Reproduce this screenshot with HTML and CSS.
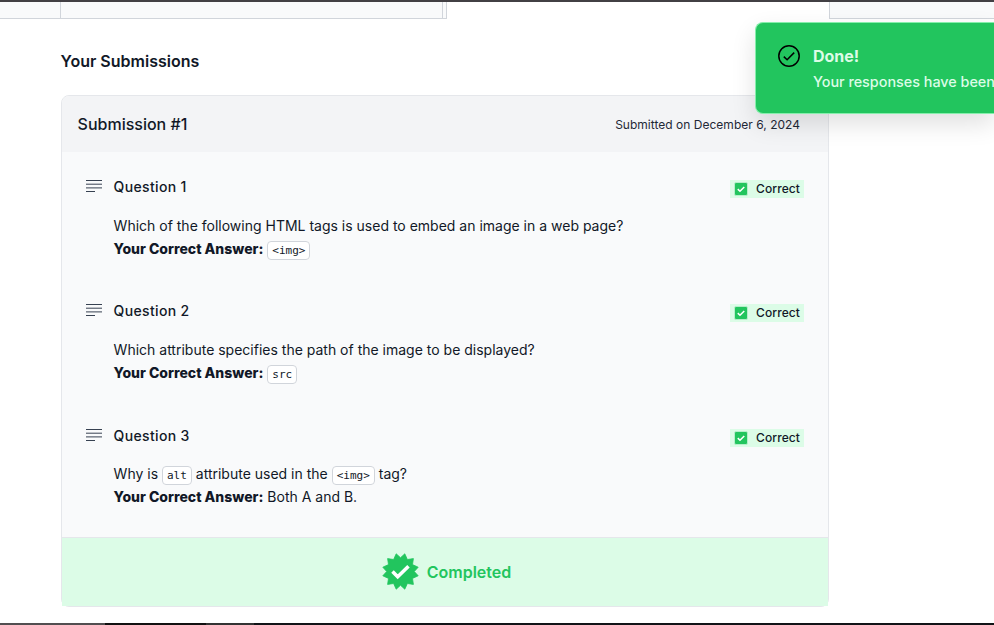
FILE: index.html
```html
<!DOCTYPE html>
<html lang="en">
<head>
<meta charset="utf-8">
<title>Your Submissions</title>
<link rel="stylesheet" href="styles.css">
</head>
<body>
<div class="top">
  <div class="panes"><span class="pane-nav"></span><span class="pane-main"></span><span class="pane-scroll"></span></div>
  <div class="side-pane"></div>
</div>
<main>
  <h2>Your Submissions</h2>
  <section class="card">
    <header><h3>Submission #1</h3><span class="date">Submitted on December 6, 2024</span></header>
    <div class="questions">
      <article>
        <svg class="lines" viewBox="0 0 16 12"><path d="M0 .5h16M0 4.2h16M0 7.9h16M0 11.5h9"/></svg>
        <div class="body"><h4>Question 1</h4>
          <p class="ask">Which of the following HTML tags is used to embed an image in a web page?</p>
          <p><b>Your Correct Answer:</b> <code>&lt;img&gt;</code></p></div>
        <span class="badge"><svg class="box" viewBox="0 0 14 14"><path d="m3.2 7.2 2.6 2.4L10.8 4.6"/></svg>Correct</span>
      </article>
      <article>
        <svg class="lines" viewBox="0 0 16 12"><path d="M0 .5h16M0 4.2h16M0 7.9h16M0 11.5h9"/></svg>
        <div class="body"><h4>Question 2</h4>
          <p class="ask">Which attribute specifies the path of the image to be displayed?</p>
          <p><b>Your Correct Answer:</b> <code>src</code></p></div>
        <span class="badge"><svg class="box" viewBox="0 0 14 14"><path d="m3.2 7.2 2.6 2.4L10.8 4.6"/></svg>Correct</span>
      </article>
      <article>
        <svg class="lines" viewBox="0 0 16 12"><path d="M0 .5h16M0 4.2h16M0 7.9h16M0 11.5h9"/></svg>
        <div class="body"><h4>Question 3</h4>
          <p class="ask">Why is <code>alt</code> attribute used in the <code>&lt;img&gt;</code> tag?</p>
          <p><b>Your Correct Answer:</b> Both A and B.</p></div>
        <span class="badge"><svg class="box" viewBox="0 0 14 14"><path d="m3.2 7.2 2.6 2.4L10.8 4.6"/></svg>Correct</span>
      </article>
    </div>
    <footer>
      <svg class="seal" viewBox="-18.5 -18.5 37 37"><path class="star" d="M0 -13.8 4.3 -17.7 6.9 -12 12.9 -12.9 12 -6.9 17.7 -4.3 13.8 0 17.7 4.3 12 6.9 12.9 12.9 6.9 12 4.3 17.7 0 13.8 -4.3 17.7 -6.9 12 -12.9 12.9 -12 6.9 -17.7 4.3 -13.8 0 -17.7 -4.3 -12 -6.9 -12.9 -12.9 -6.9 -12 -4.3 -17.7Z"/><path class="tick" d="m-8 0 5.2 5.3L8-5.3"/></svg>
      <strong>Completed</strong>
    </footer>
  </section>
</main>
<aside class="toast">
  <svg viewBox="0 0 22 22"><circle cx="11" cy="11" r="10.2"/><path d="m5.8 11.6 3.3 3.1 7.1-7.1"/></svg>
  <div><strong>Done!</strong><p>Your responses have been</p></div>
</aside>
<div class="taskbar"><span class="seg-light"></span><span class="seg-dark"></span><span class="seg-mid"></span><span class="seg-rest"></span></div>
</body>
</html>
```
FILE: styles.css
```css
* { box-sizing: border-box; }
html, body { margin: 0; height: 625px; overflow: hidden; }
body { position: relative; display: flex; flex-direction: column; background: #fff; color: #111827; font-family: Inter, sans-serif; font-size: 14px; }
h2, h3, h4, p { margin: 0; font-weight: 500; }
.top { height: 19px; flex: none; border-top: 2px solid #424044; display: flex; justify-content: space-between; }
.panes { display: flex; width: 447px; border-bottom: 1px solid #d1d5db; background: #f9fafb; }
.pane-nav { width: 61px; border-right: 1px solid #d1d5db; }
.pane-main { width: 382px; border-right: 1px solid #d1d5db; }
.pane-scroll { flex: 1; border-right: 1px solid #d1d5db; }
.side-pane { width: 165px; border: solid #d1d5db; border-width: 0 0 1px 1px; background: #f9fafb; }
main { flex: 1; width: 768px; margin-left: 61px; padding-top: 30px; }
h2 { height: 46px; font-size: 16px; line-height: 25px; font-weight: 600; margin-left: -.4px; }
.card { height: 512px; border: 1px solid #e5e7eb; border-radius: 8px; background: #f9fafb; display: flex; flex-direction: column; }
header { height: 56px; display: flex; align-items: center; justify-content: space-between; padding: 0 28px 1px 15.6px; background: #f3f4f6; border-radius: 7px 7px 0 0; }
h3 { font-size: 16px; font-weight: 450; }
.date { font-size: 12px; color: #1f2937; letter-spacing: .02px; padding-top: 2px; }
.questions { flex: 1; display: grid; grid-template-rows: 124px 125px 1fr; padding: 22px 24px 0; }
article { display: grid; grid-template-columns: 27.6px 1fr auto; align-items: start; }
.lines { width: 16px; height: 12px; margin-top: 6px; stroke: #374151; fill: none; }
h4 { font-size: 14px; line-height: 26px; font-weight: 450; letter-spacing: .35px; margin-bottom: 14px; }
article:last-child h4 { margin-bottom: 13px; }
p { font-size: 14px; line-height: 23px; font-weight: 400; }
b { font-weight: 800; }
code { font-family: "DejaVu Sans Mono", monospace; font-size: 11px; line-height: 1; border: 1px solid #d1d5db; border-radius: 4px; padding: 2px 4px; background: #fff; }
.badge { display: flex; align-items: center; height: 18px; margin-top: 6px; padding: 0 4px 1px; gap: 8.4px; font-size: 12px; font-weight: 450; letter-spacing: .1px; background: #dcfce7; }
.box { width: 14px; height: 14px; border-radius: 2px; background: #22c55e; border: 1px solid #b5efca; fill: none; stroke: #fff; stroke-width: 1.8; }
footer { height: 69px; flex: none; border-top: 1px solid #e5e7eb; background: #dcfce7; display: flex; align-items: center; justify-content: center; gap: 8px; padding: 0 0 1px 3px; color: #22c55e; }
footer strong { font-size: 16px; font-weight: 600; padding-top: 1px; }
.seal { width: 37px; height: 37px; }
.star { fill: #22c55e; stroke: #22c55e; stroke-width: .8; stroke-linejoin: round; }
.tick { fill: none; stroke: #fff; stroke-width: 3.5; }
.toast { position: absolute; left: 755px; right: 0; top: 22px; height: 92px; display: flex; gap: 13px; padding: 22px 0 22px 22px; border: 1px solid #86efac; border-right: 0; border-radius: 8px 0 0 8px; background: #22c55e; color: #dcfce7; box-shadow: 0 10px 24px rgba(0,0,0,.12); white-space: nowrap; }
.toast svg { width: 22px; height: 22px; flex: none; fill: none; stroke: #000; stroke-width: 1.5; }
.toast strong { display: block; font-size: 16px; line-height: 22px; font-weight: 700; }
.toast p { line-height: 29px; font-size: 14.4px; font-weight: 450; letter-spacing: -.02px; }
.taskbar { height: 2px; flex: none; display: flex; }
.seg-light { width: 105px; background: #514e50; }
.seg-dark { width: 101px; background: #111; }
.seg-mid { width: 48px; background: #333; }
.seg-rest { flex: 1; background: #111417; }
```
